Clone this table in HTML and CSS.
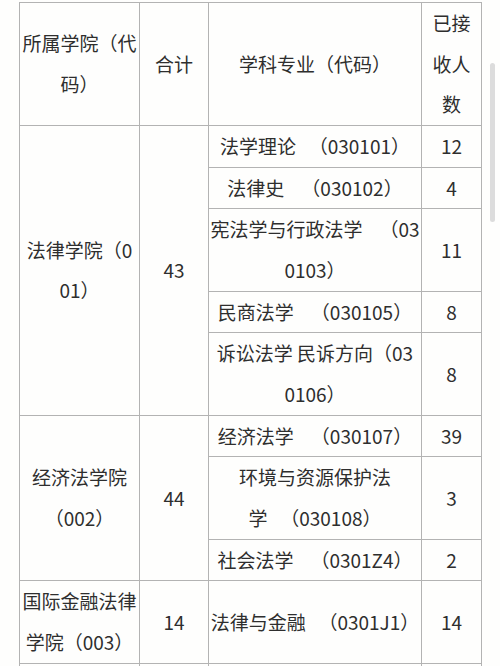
FILE: index.html
```html
<!DOCTYPE html>
<html lang="zh">
<head>
<meta charset="utf-8">
<link rel="stylesheet" href="styles.css">
</head>
<body>
<div class="page">
  <table class="grid">
    <colgroup>
      <col class="c1"><col class="c2"><col class="c3"><col class="c4">
    </colgroup>
    <tr>
      <td>所属学院（代<br>码）</td>
      <td>合计</td>
      <td>学科专业（代码）</td>
      <td>已接<br>收人<br>数</td>
    </tr>
    <tr>
      <td rowspan="5">法律学院（0<br>01）</td>
      <td rowspan="5">43</td>
      <td>法学理论&nbsp;&nbsp;&nbsp;（030101）</td>
      <td>12</td>
    </tr>
    <tr>
      <td>法律史&nbsp;&nbsp;&nbsp;&nbsp;（030102）</td>
      <td>4</td>
    </tr>
    <tr>
      <td>宪法学与行政法学&nbsp;&nbsp;&nbsp;&nbsp;（03<br>0103）</td>
      <td>11</td>
    </tr>
    <tr>
      <td>民商法学&nbsp;&nbsp;&nbsp;&nbsp;（030105）</td>
      <td>8</td>
    </tr>
    <tr>
      <td>诉讼法学 民诉方向（03<br>0106）</td>
      <td>8</td>
    </tr>
    <tr>
      <td rowspan="3">经济法学院<br>（002）</td>
      <td rowspan="3">44</td>
      <td>经济法学&nbsp;&nbsp;&nbsp;&nbsp;（030107）</td>
      <td>39</td>
    </tr>
    <tr>
      <td>环境与资源保护法<br>学&nbsp;&nbsp;&nbsp;（030108）</td>
      <td>3</td>
    </tr>
    <tr>
      <td>社会法学&nbsp;&nbsp;&nbsp;&nbsp;（0301Z4）</td>
      <td>2</td>
    </tr>
    <tr>
      <td>国际金融法律<br>学院（003）</td>
      <td>14</td>
      <td>法律与金融&nbsp;&nbsp;&nbsp;（0301J1）</td>
      <td>14</td>
    </tr>
    <tr class="cut">
      <td></td><td></td><td></td><td></td>
    </tr>
  </table>
  <div class="scrollbar"></div>
</div>
</body>
</html>
```

FILE: styles.css
```css
html, body {
  margin: 0;
  padding: 0;
  background: #fefefd;
}

body {
  width: 500px;
  height: 666px;
  overflow: hidden;
}

.page {
  position: relative;
  padding: 2px 0 0 19px;
}

.grid {
  border-collapse: collapse;
  table-layout: fixed;
  width: 462px;
  font-family: "Noto Sans CJK SC", "Noto Sans", sans-serif;
  font-size: 19px;
  color: #2e2e2e;
}

.c1 { width: 120px; }
.c2 { width: 69px; }
.c3 { width: 213px; }
.c4 { width: 60px; }

.grid td {
  border: 1px solid #b3b3b3;
  padding: 0 1px;
  line-height: 40.65px;
  text-align: center;
  vertical-align: middle;
  white-space: nowrap;
}

.grid .cut td {
  height: 40px;
}

.scrollbar {
  position: absolute;
  left: 490px;
  top: 63px;
  width: 5px;
  height: 159px;
  border-radius: 3px;
  background: #dcdcdc;
}
```
